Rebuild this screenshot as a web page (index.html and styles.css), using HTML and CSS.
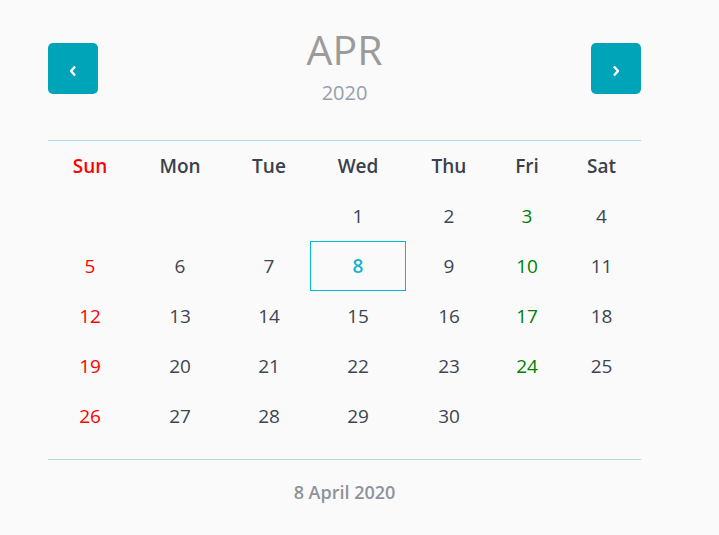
FILE: index.html
```html
<!DOCTYPE html>
<html>
<head>
<meta charset="utf-8">
<link rel="stylesheet" href="styles.css">
</head>
<body>
<div class="cal">
  <div class="head">
    <button class="nav" aria-label="Previous"><svg width="8" height="12" viewBox="0 0 8 12"><polyline points="6,1.5 2,6 6,10.5" fill="none" stroke="#fff" stroke-width="2.4" stroke-linejoin="round"/></svg></button>
    <div class="title">
      <div class="month">APR</div>
      <div class="year">2020</div>
    </div>
    <button class="nav" aria-label="Next"><svg width="8" height="12" viewBox="0 0 8 12"><polyline points="2,1.5 6,6 2,10.5" fill="none" stroke="#fff" stroke-width="2.4" stroke-linejoin="round"/></svg></button>
  </div>
  <div class="grid">
    <div class="dh sun">Sun</div>
    <div class="dh">Mon</div>
    <div class="dh">Tue</div>
    <div class="dh">Wed</div>
    <div class="dh">Thu</div>
    <div class="dh">Fri</div>
    <div class="dh">Sat</div>

    <div class="d"></div><div class="d"></div><div class="d"></div>
    <div class="d">1</div><div class="d">2</div><div class="d fri">3</div><div class="d">4</div>

    <div class="d sun">5</div><div class="d">6</div><div class="d">7</div>
    <div class="d sel">8</div><div class="d">9</div><div class="d fri">10</div><div class="d">11</div>

    <div class="d sun">12</div><div class="d">13</div><div class="d">14</div>
    <div class="d">15</div><div class="d">16</div><div class="d fri">17</div><div class="d">18</div>

    <div class="d sun">19</div><div class="d">20</div><div class="d">21</div>
    <div class="d">22</div><div class="d">23</div><div class="d fri">24</div><div class="d">25</div>

    <div class="d sun">26</div><div class="d">27</div><div class="d">28</div>
    <div class="d">29</div><div class="d">30</div><div class="d"></div><div class="d"></div>
  </div>
  <div class="foot">8 April 2020</div>
</div>
</body>
</html>
```
FILE: styles.css
```css
html, body {
  margin: 0;
  padding: 0;
  background: #fafafa;
  font-family: "Open Sans", "Liberation Sans", sans-serif;
}
.cal {
  margin-left: 48px;
  width: 593px;
  padding-top: 25px;
}
.head {
  display: flex;
  justify-content: space-between;
  align-items: flex-start;
  border-bottom: 1px solid #a8dced;
  padding-bottom: 35px;
}
.nav {
  margin-top: 18px;
  width: 50px;
  height: 51px;
  border: none;
  border-radius: 5px;
  background: #00a4b8;
  display: flex;
  align-items: center;
  justify-content: center;
  padding: 5px 0 0 0;
}
.nav svg { display: block; }
.title {
  text-align: center;
}
.month {
  font-size: 41px;
  line-height: 48px;
  color: #9b9b9b;
}
.year {
  margin-top: 8px;
  font-size: 20px;
  line-height: 24px;
  color: #97a0aa;
}
.grid {
  display: grid;
  grid-template-columns: 84px 96px 82px 96px 86px 70px 79px;
  grid-auto-rows: 50px;
  border-bottom: 1px solid #bad6e0;
  padding-bottom: 18px;
}
.dh, .d {
  display: flex;
  align-items: center;
  justify-content: center;
  font-size: 19px;
  box-sizing: border-box;
}
.dh {
  font-weight: 600;
  color: #3b414b;
}
.d {
  color: #3d4552;
}
.sun { color: #ff0000; }
.fri { color: #008000; }
.sel {
  border: 1px solid #00bcd4;
  color: #14b3cf;
  font-weight: 600;
}
.foot {
  margin-top: 20px;
  text-align: center;
  font-size: 18px;
  line-height: 24px;
  font-weight: 600;
  color: #8d939b;
}
```
